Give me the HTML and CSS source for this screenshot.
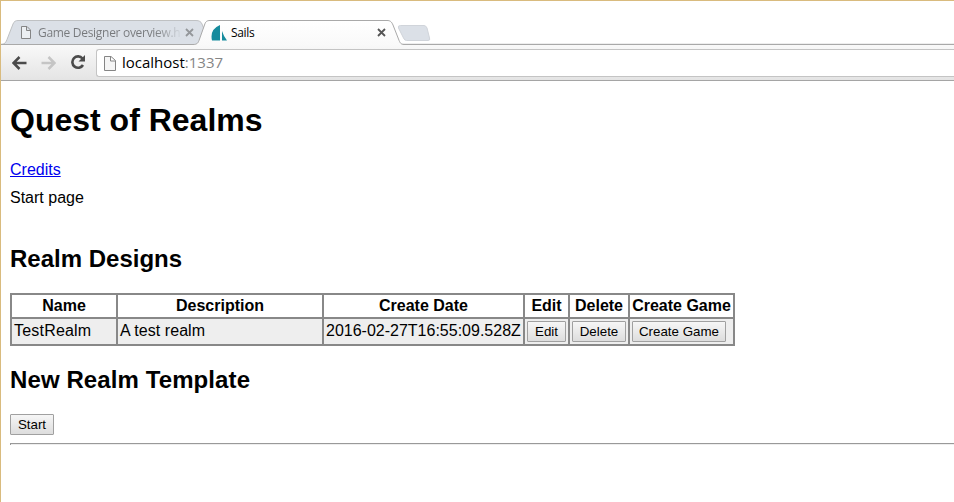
FILE: index.html
```html
<!DOCTYPE html>
<html lang="en">
<head>
<meta charset="utf-8">
<title>Sails</title>
<link rel="stylesheet" href="styles.css">
</head>
<body>
<div class="window">
  <header class="tabstrip">
    <svg class="tab-shapes" width="953" height="26" viewBox="1 19 953 26" aria-hidden="true">
      <defs>
        <linearGradient id="active" x1="0" y1="0" x2="0" y2="1"><stop offset="0" stop-color="#fff"/><stop offset="1" stop-color="#f9f9f9"/></linearGradient>
      </defs>
      <path d="M1 43.5H954" stroke="#eee"/>
      <path d="M2 44.5C5 44 6 42 7 39.5L13 24C14 21.500 15.500 20.500 18 20.500H196C199 20.500 201 21.500 202 24L206 34L202 41Q200 44.500 197 44.500Z" fill="#dbe0e7" stroke="#bfc1c3"/>
      <path d="M1 44.500H194C197 44.500 198 43 199 40.500L204.500 25C205.500 21.500 207 20.500 210 20.500H387C390 20.500 391.500 21.500 393 25L398.500 39C400 43 401 44.500 404 44.500H954V46H1Z" fill="url(#active)"/>
      <path d="M1 44.500H193C197 44.500 198 43 199 40.500L204.500 25C205.500 21.500 207 20.500 210 20.500H387C390 20.500 391.500 21.500 393 25L398.500 39C400 43 401 44.500 404 44.500H954" fill="none" stroke="#a9a9a9"/>
      <path d="M400.500 25.500H424Q426 25.500 427 28L429.500 38Q430.500 40.500 428 40.500H406.500Q404.500 40.500 403.500 38L398.500 28Q397.500 25.500 400.500 25.500Z" fill="#dbe0e7" stroke="#d0d4da"/>
    </svg>
    <div class="tab tab-first">
      <svg class="page" width="12" height="15" viewBox="0 0 12 15"><path d="M1.500 1.500H7L10.500 5V13.500H1.500ZM6.500 1.500V5.500H10.500" fill="#eceff2" stroke="#858585"/></svg>
      <span class="tab-title faded">Game Designer overview.h</span>
      <svg class="close muted" width="9" height="9" viewBox="0 0 9 9"><path d="M1 1L8 8M8 1L1 8"/></svg>
    </div>
    <div class="tab tab-active">
      <svg class="sail" width="16" height="16" viewBox="0 0 16 16"><path d="M9 0V15.500H1Q-1.500 4.500 9 0ZM11 6Q12.500 11 16 15.500H11Z" fill="#168b9d"/></svg>
      <span class="tab-title">Sails</span>
      <svg class="close" width="9" height="9" viewBox="0 0 9 9"><path d="M1 1L8 8M8 1L1 8"/></svg>
    </div>
  </header>
  <nav class="toolbar">
    <svg class="arrow" width="15" height="14" viewBox="0 0 15 14"><path d="M14.500 7H2M7.500 1L1.500 7L7.500 13" stroke="#4b4b4b"/></svg>
    <svg class="arrow forward" width="15" height="14" viewBox="0 0 15 14"><path d="M.5 7H13M7.500 1L13.500 7L7.500 13" stroke="#c5c5c5"/></svg>
    <svg class="reload" width="16" height="15" viewBox="0 0 16 15"><path d="M12.500 3.500A5.700 5.700 0 1 0 13 10" fill="none" stroke="#4b4b4b" stroke-width="2.600"/><path d="M15 0V6.500H8.500Z" fill="#4b4b4b"/></svg>
    <div class="address">
      <svg width="12" height="16" viewBox="0 0 12 16"><path d="M.5 1.500H7L11.500 5.500V15.500H.5ZM6.500 1.500V6H11.500" fill="#f5f5f5" stroke="#858585"/></svg>
      <span class="url">localhost<span class="port">:1337</span></span>
    </div>
  </nav>
  <main class="content">
    <h1>Quest of Realms</h1>
    <p class="credits"><a href="#">Credits</a></p>
    <p class="intro">Start page</p>
    <h2>Realm Designs</h2>
    <table>
      <colgroup><col class="c-name"><col class="c-desc"><col class="c-date"><col class="c-edit"><col class="c-delete"><col class="c-game"></colgroup>
      <thead><tr><th>Name</th><th>Description</th><th>Create Date</th><th>Edit</th><th>Delete</th><th>Create Game</th></tr></thead>
      <tbody><tr><td class="name">TestRealm</td><td><span class="desc">A test realm</span></td><td>2016-02-27T16:55:09.528Z</td><td><button class="b-edit">Edit</button></td><td><button class="b-delete">Delete</button></td><td><button class="b-game">Create Game</button></td></tr></tbody>
    </table>
    <h2 class="template">New Realm Template</h2>
    <button class="b-start">Start</button>
    <hr>
  </main>
</div>
</body>
</html>
```
FILE: styles.css
```css
* { box-sizing: border-box; }
body { margin: 0; overflow: hidden; background: #fff; color: #000; font: 16px/18px "Liberation Sans", Arial, sans-serif; }
.window { height: 502px; border-top: 1px solid #d9bb7e; border-left: 1px solid #d9bb7e; overflow: hidden; }
svg { display: block; flex: none; }
.tabstrip { position: relative; display: flex; height: 44px; padding-top: 19px; }
.tab-shapes { position: absolute; left: 0; top: 18px; }
.tab { position: relative; display: flex; align-items: center; height: 25px; }
.tab-first { width: 192px; padding-left: 19px; }
.tab-active { width: 193px; padding-left: 18px; }
.tab-title { flex: 1; margin-left: 6px; font: 12px/18px "Open Sans", "Noto Sans", sans-serif; letter-spacing: -.22px; white-space: nowrap; }
.tab-active .tab-title { margin-left: 4px; letter-spacing: -.35px; }
.tab-title.faded { letter-spacing: -.3px; color: transparent; background: linear-gradient(90deg, #77797c 82%, #d0d5db 100%); -webkit-background-clip: text; background-clip: text; }
.sail { margin-top: 1px; }
.close { margin-left: 6px; }
.close path { stroke: #555; stroke-width: 1.8; }
.muted { margin: 0 1px 0 5px; }
.muted path { stroke: #94979b; }
.toolbar { display: flex; align-items: center; height: 36px; padding-left: 11px; background: linear-gradient(#f9f9f9, #e4e4e4); border-bottom: 1px solid #a5a5a5; }
.arrow path { fill: none; stroke-width: 2.5; }
.forward { margin-left: 14px; }
.reload { margin-left: 14px; }
.address { display: flex; align-items: center; flex: 1; height: 28px; margin-left: 10px; padding-left: 7px; background: #fff; border: 1px solid #c4c4c4; border-right: 0; border-radius: 3px 0 0 3px; }
.url { margin: -2px 0 0 6px; font: 15px/24px "Open Sans", "Noto Sans", sans-serif; }
.port { color: #858585; }
.content { padding: 20px 0 0 9px; }
h1 { margin: 0; font-size: 32px; line-height: 38px; }
p { margin: 0; }
.credits { margin-top: 22px; }
a { color: #00e; }
.intro { margin-top: 10px; }
h2 { margin: 38px 0 20px; font-size: 24px; line-height: 28px; }
table { width: 725px; table-layout: fixed; border-collapse: collapse; }
.c-name { width: 106px; }
.c-desc { width: 206px; }
.c-date { width: 201px; }
.c-edit { width: 45px; }
.c-delete { width: 60px; }
.c-game { width: 105px; }
th, td { height: 24px; padding: 1px; border: 2px solid #888; white-space: nowrap; }
td { height: 27px; padding: 0 1px 1px 2px; background: #eee; text-align: left; }
td button { margin-top: 1px; }
.name { letter-spacing: .2px; }
.desc { letter-spacing: .05px; }
button { display: block; height: 21px; padding: 0; border: 1px solid #a0a0a0; border-radius: 1px; background: linear-gradient(#f6f6f6, #ddd); color: #000; font: 13.333px/19px "Liberation Sans", Arial, sans-serif; white-space: nowrap; }
.b-edit { width: 39px; }
.b-delete { width: 54px; }
.b-game { width: 94px; }
.b-start { width: 44px; }
.template { margin: 20px 0; letter-spacing: .1px; }
hr { height: 2px; margin: 8px 0 0; border: 0; border-top: 1px solid #999; border-left: 1px solid #999; background: #eee; }
```
